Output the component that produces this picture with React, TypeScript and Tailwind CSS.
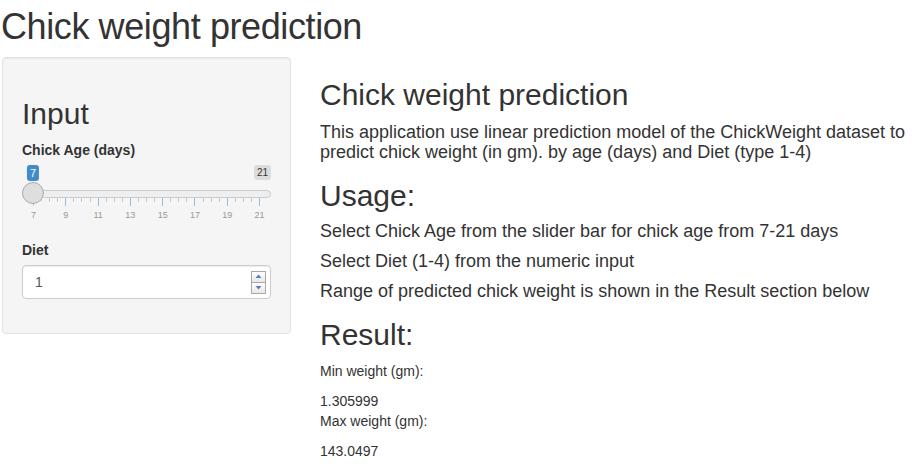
import React from "react";

// tick positions along the slider (px from slider left), 7..21 by 0.5
const ticks = Array.from({ length: 29 }, (_, k) => ({
  x: 11 + (226 * k) / 28,
  major: k % 4 === 0,
  label: 7 + k / 2,
}));

function AgeSlider() {
  return (
    <div className="relative h-[60px] w-full">
      {/* single value */}
      <span
        className="absolute top-0 -translate-x-1/2 rounded-[3px] bg-[#428bca] px-[3px] py-[1px] text-[11px] leading-[14px] text-white"
        style={{ left: 11 }}
      >
        7
      </span>
      {/* max label */}
      <span className="absolute right-0 top-0 rounded-[3px] bg-black/10 px-[3px] py-[1px] text-[10px] leading-[13px] text-[#333]">
        21
      </span>
      {/* track */}
      <div className="absolute left-0 right-0 top-[25px] h-[8px] rounded-[16px] border border-[#cccccc] bg-[#eeeeee]" />
      {/* grid */}
      {ticks.map((t) => (
        <div
          key={t.x}
          className={
            t.major
              ? "absolute top-[33px] h-[8px] w-px bg-[#428bca]/50"
              : "absolute top-[33px] h-[4px] w-px bg-[#999999]/50"
          }
          style={{ left: Math.round(t.x) }}
        />
      ))}
      {ticks
        .filter((t) => t.major)
        .map((t) => (
          <span
            key={t.label}
            className="absolute top-[46px] -translate-x-1/2 text-[9px] leading-[9px] text-[#999999]"
            style={{ left: t.x + 0.5 }}
          >
            {t.label}
          </span>
        ))}
      {/* handle */}
      <div className="absolute left-0 top-[17px] h-[22px] w-[22px] rounded-full border border-[#aaaaaa] bg-[#dedede] shadow-[1px_1px_3px_rgba(255,255,255,0.3)]" />
    </div>
  );
}

function NumberInput() {
  return (
    <div className="flex h-[34px] w-full items-center justify-between rounded-[4px] border border-[#cccccc] bg-white pl-[12px] pr-[4px] text-[#555555] shadow-[inset_0_1px_1px_rgba(0,0,0,0.075)]">
      <span>1</span>
      <div className="flex h-[23px] w-[15px] flex-col border border-[#a8a8a8] bg-[#f4f4f4]">
        <div className="flex flex-1 items-center justify-center border-b border-[#a8a8a8] bg-gradient-to-b from-white to-[#e8e8e8]">
          <svg width="7" height="5" viewBox="0 0 7 5">
            <path d="M3.5 0.5 L6.5 4 L0.5 4 Z" fill="#5a78cc" />
          </svg>
        </div>
        <div className="flex flex-1 items-center justify-center bg-gradient-to-b from-white to-[#e8e8e8]">
          <svg width="7" height="5" viewBox="0 0 7 5">
            <path d="M0.5 1 L6.5 1 L3.5 4.5 Z" fill="#5a78cc" />
          </svg>
        </div>
      </div>
    </div>
  );
}

export default function App() {
  return (
    <div className="min-h-screen bg-white font-['Liberation_Sans',Arial,sans-serif] text-[14px] leading-[20px] text-[#333333]">
      <h1 className="pl-[1px] pt-[7px] text-[36px] font-normal leading-[40px] tracking-[-0.4px]">
        Chick weight prediction
      </h1>

      <div className="mt-[10px] flex items-start pl-[2px]">
        {/* sidebar */}
        <div className="w-[289px] shrink-0 rounded-[4px] border border-[#e3e3e3] bg-[#f5f5f5] p-[19px] shadow-[inset_0_1px_1px_rgba(0,0,0,0.05)]">
          <h2 className="mt-[20px] text-[30px] font-normal leading-[33px]">Input</h2>
          <div className="mt-[10px] mb-[15px]">
            <div className="mb-[5px] font-bold">Chick Age (days)</div>
            <AgeSlider />
          </div>
          <div className="mb-[15px]">
            <div className="mb-[5px] font-bold">Diet</div>
            <NumberInput />
          </div>
        </div>

        {/* main panel */}
        <div className="ml-[29px] flex-1">
          <h2 className="mt-[21px] text-[30px] font-normal leading-[33px]">Chick weight prediction</h2>
          <h4 className="mt-[11px] whitespace-nowrap text-[18px] font-normal leading-[20px]">
            This application use linear prediction model of the ChickWeight dataset to
            <br />
            predict chick weight (in gm). by age (days) and Diet (type 1-4)
          </h4>

          <h2 className="mt-[17px] text-[30px] font-normal leading-[33px]">Usage:</h2>
          <h4 className="mt-[9px] text-[18px] font-normal leading-[20px]">
            Select Chick Age from the slider bar for chick age from 7-21 days
          </h4>
          <h4 className="mt-[10px] text-[18px] font-normal leading-[20px]">
            Select Diet (1-4) from the numeric input
          </h4>
          <h4 className="mt-[10px] text-[18px] font-normal leading-[20px]">
            Range of predicted chick weight is shown in the Result section below
          </h4>

          <h2 className="mt-[17px] text-[30px] font-normal leading-[33px]">Result:</h2>
          <p className="mt-[10px]">Min weight (gm):</p>
          <div className="mt-[10px]">1.305999</div>
          <p>Max weight (gm):</p>
          <div className="mt-[10px]">143.0497</div>
        </div>
      </div>
    </div>
  );
}
